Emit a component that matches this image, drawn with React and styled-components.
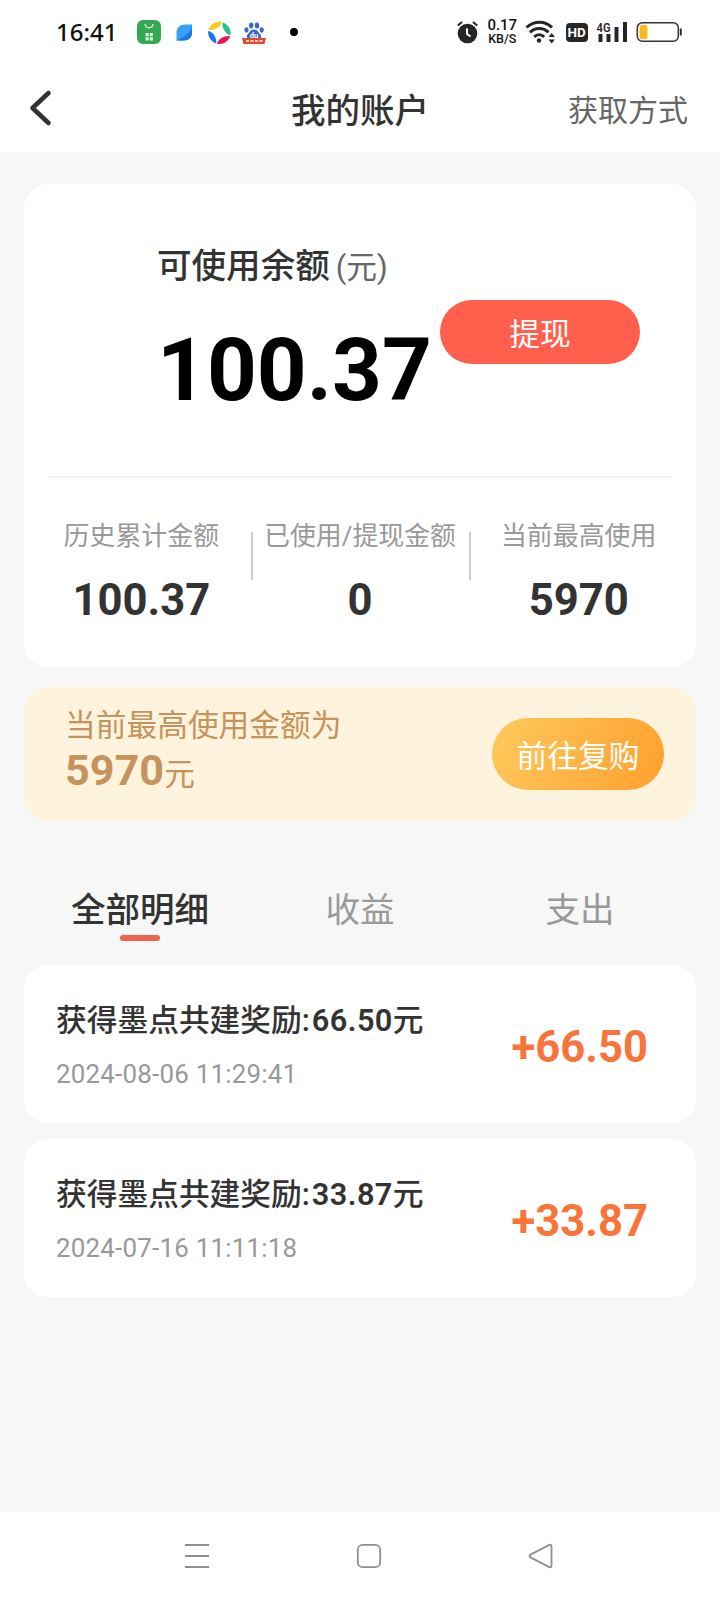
import React, { useState } from 'react';
import styled, { createGlobalStyle } from 'styled-components';

const tabs = ['全部明细', '收益', '支出'];

const stats = [
  { label: '历史累计金额', value: '100.37' },
  { label: '已使用/提现金额', value: '0' },
  { label: '当前最高使用', value: '5970' },
];

const records = [
  { id: 1, amount: '66.50', date: '2024-08-06 11:29:41' },
  { id: 2, amount: '33.87', date: '2024-07-16 11:11:18' },
];

function StatusBar() {
  return (
    <StatusWrap>
      <Clock>16:41</Clock>
      <AppIcons width="164" height="32" viewBox="136 16 164 32">
        <rect x="137" y="20" width="24" height="24" rx="6" fill="#34a853" />
        <path
          d="M145 24c.5 5 7.500 5 8 0"
          fill="none"
          stroke="#d9f5dc"
          strokeWidth="1.3"
        />
        <path
          d="M145.500 33h3.200v3.200h-3.200zM149.700 33h3.200v3.200h-3.200zM145.500 37.200h3.200v3.200h-3.200zM149.700 37.200h3.200v3.200h-3.200z"
          fill="#d9f5dc"
        />
        <path
          d="M192 24.500h-7c-5 0-8.500 3.500-8.500 8v8h7c5.500 0 8.500-3.500 8.500-8z"
          fill="#35a0fb"
        />
        <path d="M192 27c-2 6-7 10-15.500 13.500h7c5.500 0 8.500-3.500 8.500-8z" fill="#1f74e4" />
        <path d="M208.500 30c1.500-6 7-9.500 13.500-8-2 5-7 8.500-13.500 8z" fill="#fbc91b" />
        <path d="M222.500 22.200c5.500 2 9 7.500 8 13.300-5-1.500-8.500-7-8-13.300z" fill="#2bbf8a" />
        <path d="M230.300 36c-1.800 5.300-7 8.800-13.300 7.800 1.500-5.300 7-8.300 13.300-7.800z" fill="#ee1358" />
        <path d="M216.300 43.500c-5.500-2-9-7.500-8-12.800 5 1.500 8.500 6.500 8 12.800z" fill="#1479f0" />
        <g fill="#3b69c9">
          <ellipse cx="246.500" cy="30" rx="2.100" ry="2.700" />
          <ellipse cx="251.200" cy="25.500" rx="2.200" ry="3" />
          <ellipse cx="257" cy="25.500" rx="2.200" ry="3" />
          <ellipse cx="261.700" cy="30" rx="2.100" ry="2.700" />
          <path d="M254 29.500c3.500 0 4.500 3 6.500 5 1.500 2 .5 5-2.500 5h-8c-3 0-4-3-2.500-5 2-2 3-5 6.500-5z" />
        </g>
        <text
          x="254"
          y="37.500"
          textAnchor="middle"
          fontSize="7.500"
          fontWeight="700"
          fontFamily="Roboto, sans-serif"
          fill="#fff"
        >
          du
        </text>
        <path d="M242 38h24l-1.500 6h-21z" fill="#e24a30" />
        <path d="M246 41h3m1.500 0h3m1.500 0h3m1.500 0h3" stroke="#ffd9bd" strokeWidth="2" />
        <circle cx="294" cy="32" r="4" fill="#000" />
      </AppIcons>
      <SystemIcons>
        <svg width="22" height="23" viewBox="458 21 22 23">
          <circle cx="468.500" cy="33.500" r="9.800" fill="#262626" />
          <path
            d="M458.800 25.500l4.200-3.500M478.200 25.500l-4.200-3.500"
            stroke="#262626"
            strokeWidth="2.200"
          />
          <path
            d="M468 28.500v5.500l3.500 2.500"
            fill="none"
            stroke="#fff"
            strokeWidth="2"
          />
        </svg>
        <NetSpeed>
          <b>0.17</b>
          <span>KB/S</span>
        </NetSpeed>
        <svg width="32" height="24" viewBox="525 20 32 24">
          <g fill="none" stroke="#262626" strokeWidth="3">
            <path d="M526.500 27.500c7.500-7 18.500-7 25.500 0" />
            <path d="M530 32.300c5.500-5 13-5 18.500 0" />
            <path d="M534.200 36.800c3-2.800 7-2.800 10 0" />
          </g>
          <circle cx="539" cy="40.500" r="2.200" fill="#262626" />
          <path d="M548.500 37l3.200-4 3.200 4zM548.500 39.500l3.200 4 3.200-4z" fill="#262626" />
        </svg>
        <HdBadge>HD</HdBadge>
        <svg width="32" height="23" viewBox="596 21 32 23">
          <path
            d="M600.500 34v8M608.500 34v8M616.500 27v15M625 22v20"
            stroke="#262626"
            strokeWidth="4"
          />
          <text
            x="596.500"
            y="31.500"
            fontSize="12.500"
            fontWeight="600"
            fontFamily="Roboto, sans-serif"
            textLength="14"
            lengthAdjust="spacingAndGlyphs"
            fill="#262626"
          >
            4G
          </text>
        </svg>
        <svg width="46" height="22" viewBox="636 21 46 22">
          <rect
            x="637.300"
            y="22.700"
            width="41"
            height="18.600"
            rx="5"
            fill="#fff"
            stroke="#333"
            strokeWidth="1.500"
          />
          <rect x="639.500" y="25" width="8" height="14" rx="2.500" fill="#f8b91e" />
          <path d="M680.800 28.500v7" stroke="#333" strokeWidth="2" />
        </svg>
      </SystemIcons>
    </StatusWrap>
  );
}

function App() {
  const [activeTab, setActiveTab] = useState(0);

  return (
    <Page>
      <GlobalStyle />
      <StatusBar />
      <Header>
        <BackButton>
          <svg width="26" height="38" viewBox="0 0 26 38">
            <path
              d="M21.500 4L5.500 19l16 15"
              fill="none"
              stroke="#333"
              strokeWidth="4.600"
              strokeLinecap="round"
              strokeLinejoin="round"
            />
          </svg>
        </BackButton>
        <Title>我的账户</Title>
        <HeaderLink>获取方式</HeaderLink>
      </Header>

      <Content>
        <BalanceCard>
          <BalanceTop>
            <BalanceInfo>
              <BalanceLabel>
                可使用余额<span>(元)</span>
              </BalanceLabel>
              <Balance>100.37</Balance>
            </BalanceInfo>
            <WithdrawButton>提现</WithdrawButton>
          </BalanceTop>
          <StatRow>
            {stats.map((stat) => (
              <Stat key={stat.label}>
                <p>{stat.label}</p>
                <strong>{stat.value}</strong>
              </Stat>
            ))}
          </StatRow>
        </BalanceCard>

        <Banner>
          <BannerText>
            <p>当前最高使用金额为</p>
            <div>
              <strong>5970</strong>元
            </div>
          </BannerText>
          <RebuyButton>前往复购</RebuyButton>
        </Banner>

        <TabRow>
          {tabs.map((tab, idx) => (
            <Tab
              key={tab}
              $active={activeTab === idx}
              onClick={() => setActiveTab(idx)}
            >
              {tab}
            </Tab>
          ))}
        </TabRow>

        <RecordList>
          {records.map((record) => (
            <Record key={record.id}>
              <div>
                <RecordTitle>
                  获得墨点共建奖励:<span>{record.amount}</span>元
                </RecordTitle>
                <RecordDate>{record.date}</RecordDate>
              </div>
              <RecordAmount>+{record.amount}</RecordAmount>
            </Record>
          ))}
        </RecordList>
      </Content>

      <NavBar>
        <svg width="26" height="26" viewBox="0 0 26 26">
          <path d="M1 2h24M1 13h24M1 24h24" />
        </svg>
        <svg width="26" height="26" viewBox="0 0 26 26">
          <rect x="1.800" y="1.800" width="22.400" height="22.400" rx="5" />
        </svg>
        <svg width="26" height="26" viewBox="0 0 26 26">
          <path d="M2.500 11.600L20.800 2.100q2.700-1.100 2.700 1.400v19q0 2.500-2.700 1.400L2.500 14.400q-2-1.400 0-2.800z" />
        </svg>
      </NavBar>
    </Page>
  );
}

const GlobalStyle = createGlobalStyle`
  * {
    box-sizing: border-box;
  }
  body {
    margin: 0;
    font-family: Roboto, 'Noto Sans CJK SC', sans-serif;
    color: #333;
  }
  p {
    margin: 0;
  }
  button {
    border: none;
    padding: 0;
    background: none;
    font-family: inherit;
    cursor: pointer;
  }
  svg {
    display: block;
  }
`;

const Page = styled.div`
  width: 720px;
  height: 1600px;
  display: flex;
  flex-direction: column;
  background-color: #f7f7f7;
  overflow: hidden;
`;

const StatusWrap = styled.div`
  height: 64px;
  display: flex;
  align-items: center;
  padding: 0 38px 0 56px;
  background-color: #fff;
`;

const Clock = styled.span`
  width: 80px;
  padding-bottom: 2px;
  font-family: 'Noto Sans', sans-serif;
  font-size: 24px;
  font-weight: 500;
  color: #111;
`;

const AppIcons = styled.svg`
  flex-shrink: 0;
`;

const SystemIcons = styled.div`
  display: flex;
  align-items: center;
  margin-left: auto;
  gap: 8.2px;
`;

const NetSpeed = styled.div`
  width: 30px;
  display: flex;
  flex-direction: column;
  align-items: center;
  font-family: Roboto, sans-serif;
  color: #111;
  b {
    font-size: 15px;
    font-weight: 500;
    line-height: 13px;
  }
  span {
    font-size: 12.5px;
    font-weight: 500;
    line-height: 13px;
  }
`;

const HdBadge = styled.span`
  width: 22px;
  height: 19px;
  border-radius: 4px;
  background-color: #262626;
  color: #fff;
  font-size: 13.5px;
  font-weight: 700;
  line-height: 19px;
  text-align: center;
`;

const Header = styled.div`
  height: 88px;
  display: grid;
  grid-template-columns: 1fr auto 1fr;
  align-items: center;
  padding: 0 32px 0 27px;
  background-color: #fff;
`;

const BackButton = styled.button`
  justify-self: start;
`;

const Title = styled.h1`
  margin: 0;
  padding: 5px 0 0 5px;
  font-size: 34.56px;
  font-weight: 500;
  line-height: 48px;
`;

const HeaderLink = styled.span`
  justify-self: end;
  font-size: 30px;
  color: #666;
`;

const Content = styled.div`
  flex: 1;
  padding: 32px 24px 0;
`;

const BalanceCard = styled.div`
  height: 483px;
  padding: 0 24px;
  border-radius: 24px;
  background-color: #fff;
`;

const BalanceTop = styled.div`
  height: 294px;
  display: flex;
  padding: 58px 0 0 109px;
  border-bottom: 2px solid #f2f2f2;
`;

const BalanceInfo = styled.div`
  width: 283px;
`;

const BalanceLabel = styled.p`
  font-size: 34.56px;
  font-weight: 500;
  line-height: 48px;
  span {
    margin-left: 6px;
    font-size: 30.72px;
    font-weight: 400;
    color: #666;
  }
`;

const Balance = styled.div`
  margin-top: 28px;
  font-size: 87px;
  font-weight: 700;
  line-height: 100px;
  color: #000;
`;

const WithdrawButton = styled.button`
  width: 200px;
  height: 64px;
  margin-top: 58px;
  padding-bottom: 2px;
  border-radius: 32px;
  background-color: #ff5f4c;
  color: #fff;
  font-size: 30.72px;
`;

const StatRow = styled.div`
  display: flex;
  margin: 0 -16px;
  padding-top: 38px;
`;

const Stat = styled.div`
  flex: 1;
  display: flex;
  flex-direction: column;
  align-items: center;
  background: linear-gradient(#ccc, #ccc) no-repeat left 16px / 2px 48px;
  &:first-child {
    background: none;
  }
  p {
    font-size: 25.92px;
    line-height: 40px;
    color: #999;
    white-space: nowrap;
  }
  strong {
    margin-top: 19px;
    font-size: 43.6px;
    font-weight: 700;
    line-height: 52px;
  }
`;

const Banner = styled.div`
  height: 134px;
  display: flex;
  justify-content: space-between;
  align-items: center;
  margin-top: 20px;
  padding: 0 32px 0 41px;
  border-radius: 24px;
  background-color: #fef3dd;
`;

const BannerText = styled.div`
  padding-bottom: 4px;
  font-size: 30.72px;
  color: #c5935b;
  p {
    line-height: 40px;
  }
  div {
    line-height: 49px;
  }
  strong {
    font-size: 43.2px;
    font-weight: 700;
  }
`;

const RebuyButton = styled.button`
  width: 172px;
  height: 72px;
  padding-bottom: 2px;
  border-radius: 36px;
  background: linear-gradient(110deg, #fec95c, #ffa02e);
  color: #fff;
  font-size: 30.72px;
`;

const TabRow = styled.div`
  display: flex;
  margin: 64px 6px 0;
`;

const Tab = styled.button`
  flex: 1;
  display: flex;
  flex-direction: column;
  align-items: center;
  font-size: 34.56px;
  font-weight: ${({ $active }) => ($active ? 500 : 400)};
  line-height: 50px;
  color: ${({ $active }) => ($active ? '#333' : '#999')};
  &::after {
    content: '';
    width: 40px;
    height: 6px;
    border-radius: 3px;
    background-color: ${({ $active }) => ($active ? '#f0624f' : 'transparent')};
  }
`;

const RecordList = styled.div`
  display: flex;
  flex-direction: column;
  gap: 16px;
  margin-top: 24px;
`;

const Record = styled.div`
  height: 158px;
  display: flex;
  justify-content: space-between;
  padding: 34px 48px 0 32px;
  border-radius: 24px;
  background-color: #fff;
`;

const RecordTitle = styled.p`
  font-size: 30.72px;
  font-weight: 500;
  line-height: 44px;
  span {
    margin-left: 2px;
    font-weight: 600;
    letter-spacing: 0.4px;
  }
`;

const RecordDate = styled.p`
  margin-top: 16px;
  font-size: 25.92px;
  line-height: 30px;
  letter-spacing: 0.22px;
  color: #999;
`;

const RecordAmount = styled.strong`
  margin-top: 23px;
  font-size: 43.6px;
  font-weight: 700;
  line-height: 52px;
  color: #f9743a;
`;

const NavBar = styled.div`
  height: 88px;
  display: flex;
  justify-content: space-between;
  align-items: center;
  padding: 0 166px 0 184px;
  background-color: #fff;
  svg {
    fill: none;
    stroke: #8f8f8f;
    stroke-width: 1.8;
  }
`;

export default App;
